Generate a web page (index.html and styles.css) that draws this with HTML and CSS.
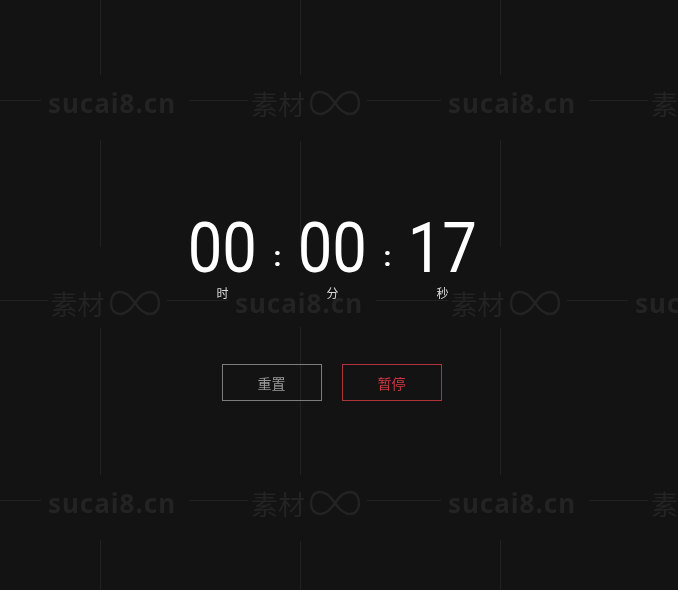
FILE: index.html
```html
<!DOCTYPE html>
<html lang="zh-CN">
<head>
<meta charset="utf-8">
<title>计时器</title>
<link rel="stylesheet" href="styles.css">
</head>
<body>
<div class="watermark" aria-hidden="true">
  <div class="cell"><span class="wm-en">sucai8.cn</span></div>
  <div class="cell"><span class="wm-cn">素材<svg class="inf" viewBox="0 0 52 26" width="52" height="26"><path d="M26 13 C20 4 15 2 11 2 C5 2 2 7 2 13 C2 19 5 24 11 24 C15 24 20 22 26 13 C32 4 37 2 41 2 C47 2 50 7 50 13 C50 19 47 24 41 24 C37 24 32 22 26 13 Z" fill="none" stroke="#232323" stroke-width="2.4"/></svg></span></div>
  <div class="cell"><span class="wm-en">sucai8.cn</span></div>
  <div class="cell"><span class="wm-cn">素材<svg class="inf" viewBox="0 0 52 26" width="52" height="26"><path d="M26 13 C20 4 15 2 11 2 C5 2 2 7 2 13 C2 19 5 24 11 24 C15 24 20 22 26 13 C32 4 37 2 41 2 C47 2 50 7 50 13 C50 19 47 24 41 24 C37 24 32 22 26 13 Z" fill="none" stroke="#232323" stroke-width="2.4"/></svg></span></div>

  <div class="cell mid"><span class="wm-cn">素材<svg class="inf" viewBox="0 0 52 26" width="52" height="26"><path d="M26 13 C20 4 15 2 11 2 C5 2 2 7 2 13 C2 19 5 24 11 24 C15 24 20 22 26 13 C32 4 37 2 41 2 C47 2 50 7 50 13 C50 19 47 24 41 24 C37 24 32 22 26 13 Z" fill="none" stroke="#232323" stroke-width="2.4"/></svg></span></div>
  <div class="cell mid"><span class="wm-en">sucai8.cn</span></div>
  <div class="cell mid"><span class="wm-cn">素材<svg class="inf" viewBox="0 0 52 26" width="52" height="26"><path d="M26 13 C20 4 15 2 11 2 C5 2 2 7 2 13 C2 19 5 24 11 24 C15 24 20 22 26 13 C32 4 37 2 41 2 C47 2 50 7 50 13 C50 19 47 24 41 24 C37 24 32 22 26 13 Z" fill="none" stroke="#232323" stroke-width="2.4"/></svg></span></div>
  <div class="cell mid"><span class="wm-en">sucai8.cn</span></div>

  <div class="cell"><span class="wm-en">sucai8.cn</span></div>
  <div class="cell"><span class="wm-cn">素材<svg class="inf" viewBox="0 0 52 26" width="52" height="26"><path d="M26 13 C20 4 15 2 11 2 C5 2 2 7 2 13 C2 19 5 24 11 24 C15 24 20 22 26 13 C32 4 37 2 41 2 C47 2 50 7 50 13 C50 19 47 24 41 24 C37 24 32 22 26 13 Z" fill="none" stroke="#232323" stroke-width="2.4"/></svg></span></div>
  <div class="cell"><span class="wm-en">sucai8.cn</span></div>
  <div class="cell"><span class="wm-cn">素材<svg class="inf" viewBox="0 0 52 26" width="52" height="26"><path d="M26 13 C20 4 15 2 11 2 C5 2 2 7 2 13 C2 19 5 24 11 24 C15 24 20 22 26 13 C32 4 37 2 41 2 C47 2 50 7 50 13 C50 19 47 24 41 24 C37 24 32 22 26 13 Z" fill="none" stroke="#232323" stroke-width="2.4"/></svg></span></div>
</div>

<main class="app">
  <div class="clock">
    <div class="unit"><span class="num">00</span><span class="label">时</span></div>
    <span class="sep">:</span>
    <div class="unit"><span class="num">00</span><span class="label">分</span></div>
    <span class="sep">:</span>
    <div class="unit"><span class="num">17</span><span class="label">秒</span></div>
  </div>
  <div class="actions">
    <button class="btn btn-reset">重置</button>
    <button class="btn btn-pause">暂停</button>
  </div>
</main>
</body>
</html>
```
FILE: styles.css
```css
* { box-sizing: border-box; }

html, body {
  margin: 0;
  height: 100%;
}

body {
  background: #131313;
  color: #fff;
  font-family: "Noto Sans", "Noto Sans CJK SC", sans-serif;
  overflow: hidden;
}

/* background watermark tiles */
.watermark {
  position: fixed;
  inset: 0;
  display: grid;
  grid-template-columns: repeat(4, 200px);
  grid-auto-rows: 200px;
  z-index: 0;
  pointer-events: none;
}

.cell {
  display: flex;
  align-items: center;
  justify-content: center;
  background:
    linear-gradient(#212121, #212121) center / 1px 100% no-repeat,
    linear-gradient(#212121, #212121) center / 100% 1px no-repeat;
}

.wm-en,
.wm-cn {
  background: #131313;
  color: #232323;
  white-space: nowrap;
  line-height: 1;
}

.wm-en {
  font-family: "Noto Sans", sans-serif;
  font-weight: 700;
  font-size: 26px;
  letter-spacing: 1px;
  padding: 15px 13px 24px 7px;
  margin: 15px 0 0 30px;
}

.wm-cn {
  font-family: "Noto Sans CJK SC", sans-serif;
  font-weight: 400;
  font-size: 27px;
  padding: 15px 6px 24px 3px;
  margin: 15px 0 0 15px;
  display: flex;
  align-items: center;
}

.mid .wm-en,
.mid .wm-cn {
  padding-top: 43px;
  padding-bottom: 11px;
  margin-top: -26px;
}

.mid .wm-en {
  margin-left: 4px;
}

.mid .wm-cn {
  margin-left: 14px;
}

.inf {
  display: block;
  margin-left: 4px;
}

/* timer */
.app {
  position: relative;
  z-index: 1;
  display: flex;
  flex-direction: column;
  align-items: center;
  padding: 213px 13px 0 0;
}

.clock {
  display: flex;
  align-items: flex-start;
}

.unit {
  width: 70px;
  display: flex;
  flex-direction: column;
  align-items: center;
}

.num {
  font-family: Roboto, sans-serif;
  font-weight: 400;
  font-size: 70px;
  line-height: 70px;
  transform: scaleX(0.88);
  color: #fff;
}

.label {
  font-family: "Noto Sans CJK SC", sans-serif;
  font-size: 12px;
  line-height: 16px;
  margin-top: 2px;
  color: #d8d8d8;
}

.sep {
  width: 40px;
  text-align: center;
  font-family: Roboto, sans-serif;
  font-weight: 700;
  font-size: 28px;
  line-height: 30px;
  margin-top: 29px;
  color: #fff;
}

.actions {
  display: flex;
  gap: 20px;
  margin-top: 63px;
  margin-right: 2px;
}

.btn {
  width: 100px;
  height: 37px;
  background: transparent;
  font-family: "Noto Sans CJK SC", sans-serif;
  font-size: 14px;
  padding: 0;
  cursor: pointer;
}

.btn-reset {
  border: 1px solid #7d7d7d;
  color: #9b9b9b;
}

.btn-pause {
  border: 1px solid #b2323c;
  color: #d03a44;
}
```
